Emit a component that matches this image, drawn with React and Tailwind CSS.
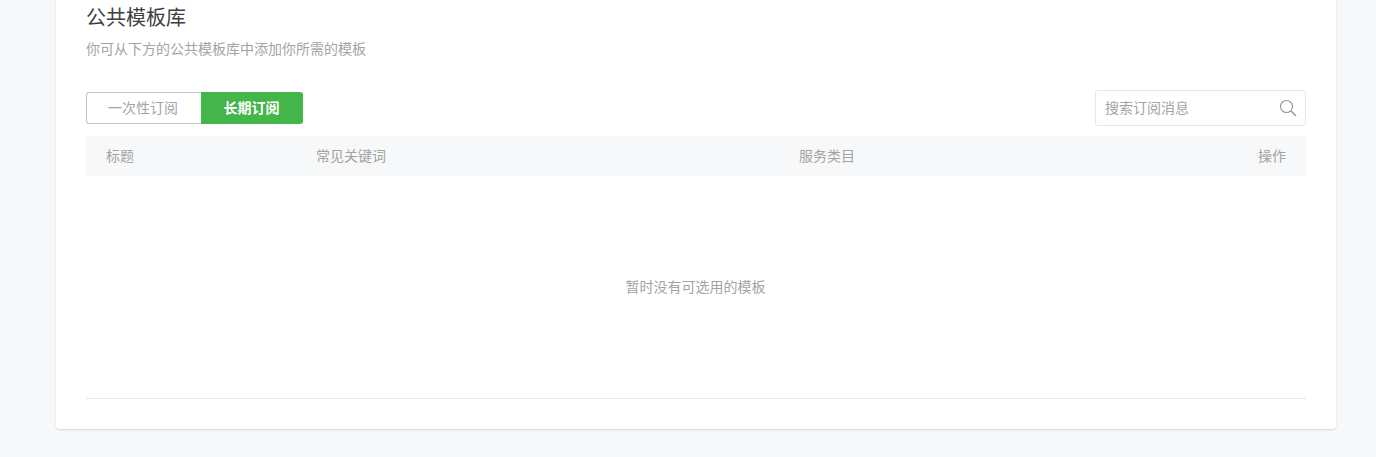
import React, { useState } from 'react';

const FONT = "font-['Microsoft_YaHei','Noto_Sans_CJK_SC',sans-serif]";

export default function App() {
  const [tab, setTab] = useState('long');

  return (
    <div className={`${FONT} h-[457px] overflow-hidden bg-[#f6f8f9] pr-10 pl-14`}>
      <div className="h-[429px] rounded-b-[4px] bg-white px-[30px] shadow-[0_1px_2px_rgba(150,150,150,0.35)]">
        {/* Header */}
        <h2 className="pt-[4px] text-[20px] leading-[26px] font-normal text-[#3e3e3e]">公共模板库</h2>
        <p className="mt-[8px] text-[14px] leading-[20px] text-[#a3a3a3]">你可从下方的公共模板库中添加你所需的模板</p>

        {/* Tabs and search */}
        <div className="mt-[32px] flex items-center justify-between">
          <div className="flex h-8 text-[14px]">
            <button
              onClick={() => setTab('once')}
              className="w-[115px] rounded-l-[3px] border border-r-0 border-[#c4c4c4] bg-white pr-[2px] pb-[2px] text-[#a3a3a3]"
            >
              一次性订阅
            </button>
            <button
              onClick={() => setTab('long')}
              className="w-[102px] rounded-r-[3px] bg-[#44b549] pr-[1px] pb-[2px] font-bold text-white"
            >
              长期订阅
            </button>
          </div>
          <div className="flex h-9 w-[211px] items-center justify-between rounded-[3px] border border-[#e7e7eb] bg-white pr-[8px] pl-[9px]">
            <span className="pb-[2px] text-[14px] text-[#a3a3a3]">搜索订阅消息</span>
            <svg width="18" height="18" viewBox="0 0 18 18" fill="none" stroke="#9a9a9a">
              <circle cx="7.5" cy="7.5" r="6" strokeWidth="1.2" />
              <path d="M12 12l5 5" strokeWidth="1.6" />
            </svg>
          </div>
        </div>

        {/* Table */}
        <div className="mt-[10px] grid h-10 grid-cols-[210px_483px_1fr_auto] items-center bg-[#f6f8f9] px-5 pb-[2px] text-[14px] text-[#a3a3a3]">
          <span>标题</span>
          <span>常见关键词</span>
          <span>服务类目</span>
          <span>操作</span>
        </div>
        <div className="flex h-[223px] items-center justify-center border-b border-[#e7e7eb] pr-[1px] pb-[2px] text-[14px] text-[#a3a3a3]">
          暂时没有可选用的模板
        </div>
      </div>
    </div>
  );
}
